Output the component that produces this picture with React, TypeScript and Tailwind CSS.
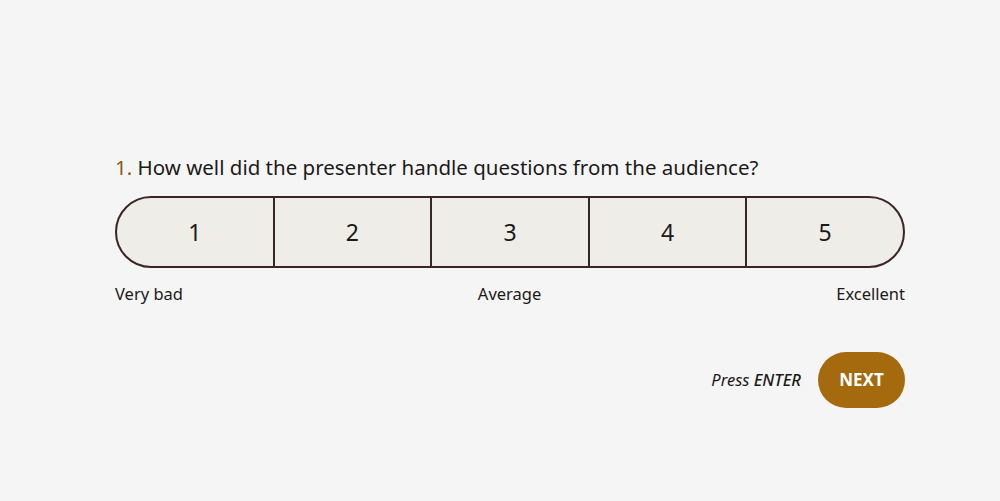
const options = [1, 2, 3, 4, 5];

export default function App() {
  return (
    <div
      className="min-h-screen w-full bg-[#f5f5f5] text-[#1c1a19]"
      style={{ fontFamily: '"Noto Sans", "Open Sans", sans-serif' }}
    >
      <div className="ml-[115px] w-[790px] pt-[152px]">
        <h1 className="text-[20.5px] leading-[30px]">
          <span className="text-[#8c5a12]">1.</span> How well did the presenter handle questions from the audience?
        </h1>

        <div className="mt-[14px] flex h-[72px] overflow-hidden rounded-full border-2 border-[#3a2626] bg-[#efede8]">
          {options.map((n, i) => (
            <button
              key={n}
              className={
                "flex flex-1 items-center justify-center text-[23px] text-[#1c1a19] " +
                (i > 0 ? "border-l-2 border-[#3a2626]" : "")
              }
            >
              {n}
            </button>
          ))}
        </div>

        <div className="mt-[15px] flex justify-between text-[16.5px] leading-[22px]">
          <span>Very bad</span>
          <span>Average</span>
          <span>Excellent</span>
        </div>

        <div className="mt-[47px] flex items-center justify-end gap-[17px]">
          <span className="text-[16.5px] italic">
            Press <span className="font-medium">ENTER</span>
          </span>
          <button className="h-[56px] w-[87px] rounded-full bg-[#a66a0e] text-[17px] font-bold text-white">
            NEXT
          </button>
        </div>
      </div>
    </div>
  );
}
